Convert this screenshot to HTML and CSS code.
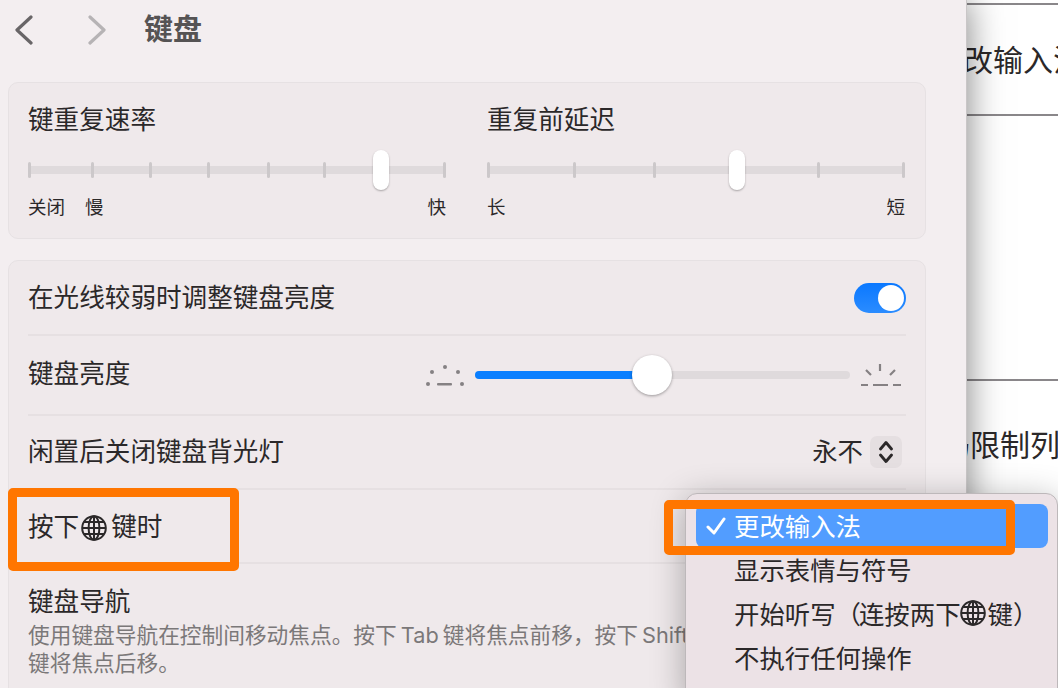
FILE: index.html
```html
<!DOCTYPE html>
<html>
    <head>
        <title>键盘</title>
        <meta charset="utf-8">
        <link rel="stylesheet" href="styles.css">
    </head>
    <body>
        <svg class="defs" width="0" height="0">
            <symbol id="globe" viewBox="0 0 26 26">
                <g fill="none" stroke="currentColor" stroke-width="2">
                    <circle cx="13" cy="13" r="11.8"/>
                    <ellipse cx="13" cy="13" rx="5.4" ry="11.8"/>
                    <path d="M13 1.2V24.8M1.2 13H24.8M3 7H23M3 19H23"/>
                </g>
            </symbol>
        </svg>

        <div class="screen">
            <div class="settings">
                <div class="toolbar">
                    <svg class="nav-icon nav-back" width="18" height="30" viewBox="0 0 18 30"><path d="M16 2L2 15L16 28"/></svg>
                    <svg class="nav-icon nav-forward" width="18" height="30" viewBox="0 0 18 30"><path d="M2 2L16 15L2 28"/></svg>
                    <h1 class="page-title">键盘</h1>
                </div>

                <div class="card repeat-card">
                    <div class="repeat-col">
                        <div class="row-label">键重复速率</div>
                        <div class="slider">
                            <div class="track"></div>
                            <i class="tick" style="left: 0px"></i>
                            <i class="tick" style="left: 63px"></i>
                            <i class="tick" style="left: 121px"></i>
                            <i class="tick" style="left: 179px"></i>
                            <i class="tick" style="left: 239px"></i>
                            <i class="tick" style="left: 295px"></i>
                            <i class="tick" style="left: 415px"></i>
                            <div class="thumb" style="left: 345px"></div>
                        </div>
                        <div class="scale">
                            <span>关闭</span>
                            <span class="scale-slow">慢</span>
                            <span class="scale-end">快</span>
                        </div>
                    </div>
                    <div class="repeat-col">
                        <div class="row-label">重复前延迟</div>
                        <div class="slider">
                            <div class="track"></div>
                            <i class="tick" style="left: 0px"></i>
                            <i class="tick" style="left: 86px"></i>
                            <i class="tick" style="left: 166px"></i>
                            <i class="tick" style="left: 330px"></i>
                            <i class="tick" style="left: 415px"></i>
                            <div class="thumb" style="left: 242px"></div>
                        </div>
                        <div class="scale">
                            <span>长</span>
                            <span class="scale-end">短</span>
                        </div>
                    </div>
                </div>

                <div class="card options-card">
                    <div class="row row-auto">
                        <div class="row-label">在光线较弱时调整键盘亮度</div>
                        <div class="toggle"><div class="toggle-knob"></div></div>
                    </div>

                    <div class="row row-brightness">
                        <div class="row-label">键盘亮度</div>
                        <div class="brightness">
                            <svg class="bright-icon" width="40" height="24" viewBox="0 0 40 24">
                                <g fill="#858183">
                                    <circle cx="20" cy="4" r="2"/>
                                    <circle cx="7" cy="9" r="2"/>
                                    <circle cx="33" cy="9" r="2"/>
                                    <circle cx="3" cy="21" r="2"/>
                                    <circle cx="37" cy="21" r="2"/>
                                    <rect x="12" y="20" width="15" height="2.4" rx="1"/>
                                </g>
                            </svg>
                            <div class="bright-track">
                                <div class="bright-fill" style="width: 47%"></div>
                                <div class="bright-thumb" style="left: 157px"></div>
                            </div>
                            <svg class="bright-icon" width="41" height="24" viewBox="0 0 41 24">
                                <g fill="none" stroke="#858183" stroke-width="2.2">
                                    <path d="M20 1V8M6 7L11 12M35 7L30 12"/>
                                    <path d="M1 22H8M13 22H28M33 22H41"/>
                                </g>
                            </svg>
                        </div>
                    </div>

                    <div class="row row-backlight">
                        <div class="row-label">闲置后关闭键盘背光灯</div>
                        <div class="select">
                            <span>永不</span>
                            <div class="stepper">
                                <svg width="14" height="24" viewBox="0 0 14 24"><path d="M1.5 9L7 2.5L12.5 9M1.5 15L7 21.5L12.5 15"/></svg>
                            </div>
                        </div>
                    </div>

                    <div class="row row-globe">
                        <div class="row-label">按下<svg class="globe"><use href="#globe"/></svg>键时</div>
                    </div>

                    <div class="row-nav">
                        <div class="row-label">键盘导航</div>
                        <div class="row-desc">使用键盘导航在控制间移动焦点。按下 Tab 键将焦点前移，按下 Shift-Tab<br>键将焦点后移。</div>
                    </div>
                </div>
            </div>

            <div class="behind">
                <div class="behind-row behind-first"><span class="behind-text behind-text-a">改输入法</span></div>
                <div class="behind-row behind-blank"></div>
                <div class="behind-last"><span class="behind-text behind-text-b">码限制列表</span></div>
            </div>

            <div class="popup">
                <div class="menu-item menu-selected">
                    <svg class="check" width="20" height="18" viewBox="0 0 20 18"><path d="M2 10L8 16L18 2"/></svg>
                    更改输入法
                </div>
                <div class="menu-item">显示表情与符号</div>
                <div class="menu-item">开始听写<span class="paren-open">（</span>连按两下<svg class="globe menu-globe"><use href="#globe"/></svg>键）</div>
                <div class="menu-item">不执行任何操作</div>
            </div>

            <div class="mark mark-label"></div>
            <div class="mark mark-menu"></div>
        </div>
    </body>
</html>
```

FILE: styles.css
```css
body {margin: 0px; font-family: Inter, "Noto Sans CJK SC", sans-serif; color: #2b2829;}

.defs {position: absolute;}

.screen {position: relative; display: flex; width: 1058px; height: 688px; overflow: hidden; background: #fff;}

/* settings window */
.settings {position: relative; z-index: 1; flex: none; box-sizing: border-box; width: 967px; height: 688px; padding: 0px 40px 0px 8px; background: #f3eef0; box-shadow: 0px 0px 34px rgba(0,0,0,.5); border-right: 1px solid #c9c6c7;}

.toolbar {display: flex; align-items: center; height: 60px; margin-bottom: 22px;}
.nav-icon {flex: none; fill: none; stroke-width: 3.2px; stroke-linecap: round; stroke-linejoin: round;}
.nav-back {stroke: #686567; margin-left: 7px;}
.nav-forward {stroke: #b6b3b5; margin-left: 55px;}
.page-title {margin: 0px 0px 0px 38px; font-size: 29px; line-height: 60px; font-weight: 700; color: #555354;}

.card {box-sizing: border-box; background: #efe9eb; border: 1px solid #e6e1e3; border-radius: 10px;}

.repeat-card {display: flex; gap: 41px; height: 157px; padding: 19px 19px 0px 19px; margin-bottom: 21px;}
.repeat-col {flex: none; width: 418px;}

.row-label {font-size: 25.6px; line-height: 36px; white-space: nowrap;}

.slider {position: relative; height: 40px; margin-top: 12px;}
.track {position: absolute; top: 16px; left: 1px; right: 1px; height: 8px; background: #dfdadc;}
.tick {position: absolute; top: 12px; width: 3px; height: 16px; background: #ccc8ca; border-radius: 2px;}
.thumb {position: absolute; top: 0px; width: 16px; height: 40px; background: #fff; border-radius: 8px; box-shadow: 0px 1px 2px rgba(0,0,0,.3);}

.scale {display: flex; margin-top: 5px; font-size: 18.5px; line-height: 24px;}
.scale-slow {margin-left: 20px;}
.scale-end {margin-left: auto;}

.options-card {height: 460px;}

.row {display: flex; align-items: center; justify-content: space-between; margin: 0px 19px; border-bottom: 2px solid #e6e0e2;}
.row-auto {height: 73px;}
.row-brightness {height: 78px;}
.row-brightness .row-label {margin-top: -3px;}
.row-backlight {height: 72px;}
.row-globe {box-sizing: border-box; height: 74px; padding-top: 1px;}

.toggle {display: flex; justify-content: flex-end; align-items: center; box-sizing: border-box; width: 52px; height: 30px; padding-right: 2px; border-radius: 15px; background: linear-gradient(#0a78ff, #2b8cff);}
.toggle-knob {width: 26px; height: 26px; border-radius: 50%; background: #fff;}

.brightness {display: flex; align-items: center; gap: 10px; padding-right: 5px;}
.bright-icon {flex: none;}
.bright-track {position: relative; width: 375px; height: 8px; background: #dfdadc; border-radius: 4px;}
.bright-fill {height: 8px; background: #0a7fff; border-radius: 4px 0px 0px 4px;}
.bright-thumb {position: absolute; top: -16px; width: 40px; height: 40px; background: #fff; border-radius: 50%; box-shadow: 0px 1px 3px rgba(0,0,0,.35);}

.select {display: flex; align-items: center; gap: 7px; padding-right: 4px; font-size: 25.4px; line-height: 32px;}
.stepper {display: flex; align-items: center; justify-content: center; width: 32px; height: 32px; background: #e5dfe1; border-radius: 7px;}
.stepper path {fill: none; stroke: #2b2829; stroke-width: 2.8px; stroke-linecap: round; stroke-linejoin: round;}

.globe {width: 26px; height: 26px; margin: 0px 4px 0px 2px; vertical-align: -5px; color: #2b2829;}
.menu-globe {margin: 0px 2px 0px -1px;}
.paren-open {margin-right: -2px;}

.row-nav {padding: 20px 19px 0px 19px;}
.row-desc {margin-top: 1px; font-size: 21.7px; line-height: 28px; color: #7b7879; white-space: nowrap; word-spacing: -2px;}

/* window behind */
.behind {flex: 1; min-width: 0px; font-size: 30px; white-space: nowrap;}
.behind-row {border-bottom: 2px solid #8a878a;}
.behind-first {box-sizing: border-box; height: 113px; padding-top: 35px; border-top: 2px solid #8a878a; margin-top: 3px;}
.behind-blank {height: 263px;}
.behind-last {padding-top: 44px;}
.behind-text {display: block; line-height: 40px;}
.behind-text-a {margin-left: -4px;}
.behind-text-b {margin-left: -27px;}

/* menu */
.popup {position: absolute; z-index: 2; left: 685px; top: 493px; box-sizing: border-box; width: 373px; height: 210px; padding: 10px 9px 0px 10px; background: #ece2e6; border: 1px solid #bdb8ba; border-radius: 12px; box-shadow: 0px 6px 34px rgba(0,0,0,.3);}
.menu-item {display: flex; align-items: center; box-sizing: border-box; height: 44px; padding-left: 38px; padding-bottom: 2px; font-size: 25.4px; white-space: nowrap;}
.menu-selected {position: relative; color: #fff; background: #529dff; border-radius: 8px;}
.check {position: absolute; left: 10px; top: 13px; fill: none; stroke: #fff; stroke-width: 3px; stroke-linecap: round; stroke-linejoin: round;}

/* orange markers */
.mark {position: absolute; z-index: 3; box-sizing: border-box; border: 9px solid #ff7600; border-radius: 5px;}
.mark-label {left: 8px; top: 488px; width: 231px; height: 83px;}
.mark-menu {left: 664px; top: 500px; width: 351px; height: 55px;}
```
